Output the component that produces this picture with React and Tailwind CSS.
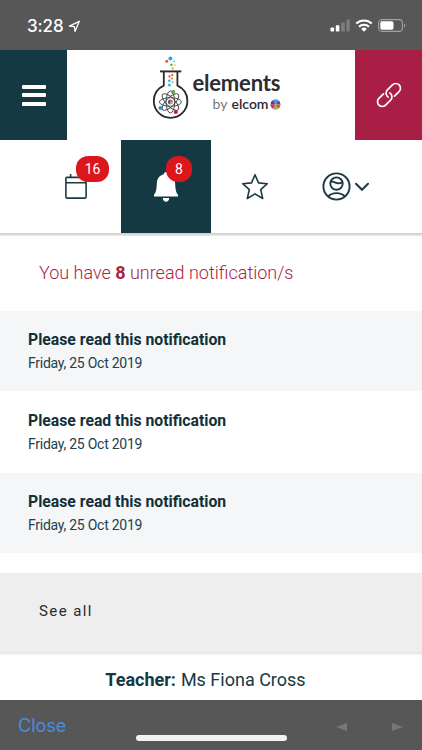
const notifications = [
  { id: 1, title: "Please read this notification", date: "Friday, 25 Oct 2019" },
  { id: 2, title: "Please read this notification", date: "Friday, 25 Oct 2019" },
  { id: 3, title: "Please read this notification", date: "Friday, 25 Oct 2019" },
];

function StatusBar() {
  return (
    <div className="flex h-[50px] shrink-0 items-center justify-between bg-[#575757] pl-[27px] pr-[16px] text-white">
      <div className="flex items-center pt-[2px]">
        <span className="font-['Inter',sans-serif] text-[17px] font-medium leading-none tracking-[-0.1px]">
          3:28
        </span>
        <svg className="ml-[4px]" width="13" height="13" viewBox="0 0 13 13" fill="none">
          <path d="M1.3 6.1 11.3 1.3 7 11.4 6.4 6.6Z" stroke="#fff" strokeWidth="1.3" strokeLinejoin="round" />
        </svg>
      </div>
      <div className="flex items-center pt-[1px]">
        <svg width="20" height="13" viewBox="0 0 20 13">
          <rect x="0.5" y="8.4" width="3.6" height="4.1" rx="0.8" fill="#fff" />
          <rect x="5.8" y="6.2" width="3.6" height="6.3" rx="0.8" fill="#fff" />
          <rect x="11.2" y="3.4" width="3.6" height="9.1" rx="0.8" fill="#7d7d7d" />
          <rect x="16.4" y="0.5" width="3.4" height="12" rx="0.8" fill="#7d7d7d" />
        </svg>
        <svg className="ml-[5px]" width="18" height="13" viewBox="0 0 18 13" fill="none" stroke="#fff">
          <path d="M1.2 4.6a11.3 11.3 0 0 1 15.6 0" strokeWidth="2.1" />
          <path d="M4 7.7a7.2 7.2 0 0 1 10 0" strokeWidth="2.1" />
          <path d="M9 12.7 6.2 9.9a4 4 0 0 1 5.6 0Z" fill="#fff" stroke="none" />
        </svg>
        <svg className="ml-[5px]" width="28" height="13" viewBox="0 0 28 13">
          <rect x="0.6" y="0.6" width="23.8" height="11.8" rx="3.4" fill="none" stroke="#a2a2a2" strokeWidth="1.1" />
          <rect x="2.3" y="2.3" width="13.2" height="8.4" rx="1.6" fill="#fff" />
          <path d="M26 4.5c1.6.5 1.6 3.5 0 4Z" fill="#a2a2a2" />
        </svg>
      </div>
    </div>
  );
}

function Flask() {
  return (
    <svg width="38" height="66" viewBox="151 54 38 66" fill="none">
      <circle cx="169.4" cy="58.5" r="2" fill="#2ba3df" />
      <circle cx="165.8" cy="61.3" r="1.5" fill="#e8562e" />
      <circle cx="173.2" cy="61.3" r="1" fill="#5cc2ee" />
      <circle cx="170.4" cy="64.7" r="1.3" fill="#62b246" />
      <circle cx="173.9" cy="65.1" r="0.8" fill="#eaa43a" />
      <circle cx="171.6" cy="68.4" r="1.1" fill="#eba23a" />
      <g stroke="#292a2e">
        <path d="M159 71.4h21.3" strokeWidth="1.9" />
        <path
          d="M162.8 71.5v14.1c-6 2.6-10 8.4-10 15.5a16.8 16.8 0 0 0 33.6 0c0-7.1-4-12.9-10-15.5v-14.1"
          strokeWidth="1.8"
          strokeLinejoin="round"
        />
      </g>
      <circle cx="171.3" cy="75" r="1" fill="#d8452e" />
      <circle cx="168.5" cy="76.4" r="1.1" fill="#df4b3a" />
      <circle cx="171" cy="78.5" r="1.2" fill="#eda02f" />
      <circle cx="168.3" cy="80.8" r="1.3" fill="#3aabdf" />
      <circle cx="171.5" cy="82.1" r="0.9" fill="#6ab84b" />
      <circle cx="168.4" cy="85" r="1.5" fill="#3db5e6" />
      <g stroke="#3a3b40" strokeWidth="0.9">
        <ellipse cx="169.4" cy="102" rx="4.3" ry="11" />
        <ellipse cx="169.4" cy="102" rx="4.3" ry="11" transform="rotate(45 169.4 102)" />
        <ellipse cx="169.4" cy="102" rx="4.3" ry="11" transform="rotate(90 169.4 102)" />
        <ellipse cx="169.4" cy="102" rx="4.3" ry="11" transform="rotate(135 169.4 102)" />
      </g>
      <circle cx="169.4" cy="102" r="3.2" fill="#fff" />
      <path d="M169.4 99.5a2.5 2.5 0 0 1 2.5 2.5h-2.5Z" fill="#e8562e" />
      <path d="M171.9 102a2.5 2.5 0 0 1-2.5 2.5V102Z" fill="#f0a433" />
      <path d="M169.4 104.5a2.5 2.5 0 0 1-2.5-2.5h2.5Z" fill="#2c6fc0" />
      <path d="M166.9 102a2.5 2.5 0 0 1 2.5-2.5v2.5Z" fill="#7a3a94" />
      <circle cx="172.1" cy="92" r="2.1" fill="#55ab40" />
      <circle cx="159.5" cy="108" r="2.1" fill="#2997d8" />
      <circle cx="174.8" cy="112" r="2.1" fill="#c4232b" />
    </svg>
  );
}

function ElcomMark() {
  return (
    <svg className="ml-[1px] mt-[2px]" width="11" height="11" viewBox="0 0 11 11">
      <path d="M5.5 5.5 3 .9Q5.5-.6 8 .9Z" fill="#2aa6de" />
      <path d="M5.5 5.5 8 .9Q10.5 2 10.6 5.5Z" fill="#2567b5" />
      <path d="M5.5 5.5h5.1Q10.4 8.8 8 10.1Z" fill="#e6502b" />
      <path d="M5.5 5.5 8 10.1Q5.5 11.5 3 10.1Z" fill="#8fbf3c" />
      <path d="M5.5 5.5 3 10.1Q.5 9 .4 5.5Z" fill="#c8326e" />
      <path d="M5.5 5.5H.4Q.6 2.2 3 .9Z" fill="#7c2d8d" />
      <circle cx="5.5" cy="5.5" r="0.9" fill="#f5a623" />
    </svg>
  );
}

function Header() {
  return (
    <header className="flex h-[90px] shrink-0 justify-between">
      <button aria-label="Menu" className="flex w-[67px] flex-col items-center justify-center gap-[4.5px] bg-[#153943]">
        <span className="h-[4px] w-[24px] rounded-[1px] bg-white" />
        <span className="h-[4px] w-[24px] rounded-[1px] bg-white" />
        <span className="h-[4px] w-[24px] rounded-[1px] bg-white" />
      </button>
      <div className="flex pl-[10px] pt-[4px]">
        <Flask />
        <div className="ml-[3px] w-[88px] pt-[15px] font-['Lato',sans-serif] text-[#2d2d31]">
          <div className="text-[22px] font-bold leading-[27px] tracking-[-0.2px]">elements</div>
          <div className="flex items-center justify-end text-[14px] leading-[15px]">
            <span className="text-[#77787b]">by</span>
            <span className="ml-[4px] font-semibold">elcom</span>
            <ElcomMark />
          </div>
        </div>
      </div>
      <button aria-label="Links" className="flex w-[67px] items-center justify-center bg-[#a91e45]">
        <svg width="26" height="26" viewBox="0 0 26 26" fill="none" stroke="#fff" strokeWidth="1.7" strokeLinecap="round">
          <path d="M7.5 11.8 2.9 16.4a4.7 4.7 0 0 0 0 6.7 4.7 4.7 0 0 0 6.7 0l5-5a4.6 4.6 0 0 0-.8-7.2" />
          <path d="M18.5 14.2l4.6-4.6a4.7 4.7 0 0 0 0-6.7 4.7 4.7 0 0 0-6.7 0l-5 5a4.6 4.6 0 0 0 .8 7.2" />
        </svg>
      </button>
    </header>
  );
}

function Badge({ children, className }) {
  return (
    <span
      className={`absolute top-[16px] flex h-[26px] items-center justify-center rounded-[12px] bg-[#dc161b] text-[14px] text-white ${className}`}
    >
      {children}
    </span>
  );
}

function NavBar() {
  return (
    <nav className="grid h-[93px] shrink-0 grid-cols-[90px_90px_90px_90px] justify-center">
      <div className="relative flex items-center justify-center">
        <svg width="24" height="28" viewBox="0 0 24 28" fill="none" stroke="#1c3a44" strokeWidth="1.6">
          <rect x="1.9" y="4.4" width="20.2" height="20.7" rx="1" />
          <path d="M2 9.7h20M6.6 1v3.5M17.4 1v3.5" />
        </svg>
        <Badge className="left-[45px] w-[33px]">16</Badge>
      </div>
      <div className="relative flex items-center justify-center bg-[#153943]">
        <svg className="mt-px" width="24" height="30" viewBox="0 0 24 30" fill="#fff">
          <path d="M12 0c1.3 0 2 .8 2.1 2.2 4.4 1 6.7 4.2 7 8.5.4 6.3.6 9.5 2.9 12v1.8H0v-1.8c2.3-2.5 2.5-5.7 2.9-12 .3-4.3 2.6-7.5 7-8.5C10 .8 10.7 0 12 0Z" />
          <path d="M8.8 26h6.4c-.2 2.5-1.4 3.8-3.2 3.8S9 28.5 8.8 26Z" />
        </svg>
        <Badge className="left-[45px] w-[26px]">8</Badge>
      </div>
      <div className="flex items-center justify-center pr-[2px]">
        <svg width="28" height="28" viewBox="0 0 28 28" fill="none" stroke="#1c3a44" strokeWidth="1.6" strokeLinejoin="round">
          <path d="m14 1.8 3.5 8.1 8.8.8-6.6 5.9 2 8.9L14 20.9l-7.7 4.6 2-8.9-6.6-5.9 8.8-.8Z" />
        </svg>
      </div>
      <div className="flex items-center justify-center">
        <svg width="29" height="29" viewBox="0 0 29 29" fill="none" stroke="#1c3a44" strokeWidth="1.9">
          <circle cx="14.5" cy="14.5" r="13.1" />
          <circle cx="14.5" cy="11.6" r="6.2" />
          <path d="M8.6 9.7c2.1-.4 3.4.2 4.9.9 2.2 1 4.6 1 6.9-.4" />
          <path d="M6.1 24.6c4-4.6 12.8-4.6 16.8 0" />
        </svg>
        <svg className="ml-[3px]" width="16" height="10" viewBox="0 0 16 10" fill="none" stroke="#1c3a44" strokeWidth="2" strokeLinecap="round">
          <path d="m2 1.8 6 6 6-6" />
        </svg>
      </div>
    </nav>
  );
}

function Notification({ title, date }) {
  return (
    <li className="mb-px h-[80px] pl-[28px] pt-[18px] odd:bg-[#f4f6f8]">
      <h3 className="text-[15.75px] font-bold leading-[22px] text-[#123039]">{title}</h3>
      <p className="mt-[3px] text-[14px] leading-[19px] tracking-[-0.25px] text-[#24404a]">{date}</p>
    </li>
  );
}

export default function App() {
  return (
    <div className="flex h-[750px] w-[422px] flex-col overflow-hidden bg-white font-['Roboto',sans-serif]">
      <StatusBar />
      <Header />
      <NavBar />
      <div className="h-[3px] shrink-0 bg-linear-to-b from-[#c9c7c9] to-[#ececec]" />

      <h2 className="h-[75px] shrink-0 pl-[39px] pt-[24px] text-[18px] font-light leading-[26px] text-[#a91e45]">
        You have <b className="font-bold">8</b> unread notification/s
      </h2>
      <ul className="shrink-0">
        {notifications.map((item) => (
          <Notification key={item.id} title={item.title} date={item.date} />
        ))}
      </ul>

      <div className="mt-[19px] flex h-[79px] shrink-0 items-center bg-[#eeeeee] pb-[2px] pl-[39px] text-[15px] tracking-[1.4px] text-[#2b2b2b]">
        See all
      </div>
      <div className="h-[3px] shrink-0 bg-linear-to-b from-[#e6e2e3] to-[#f6f4f5]" />
      <p className="flex flex-1 items-center justify-center pr-[11px] pt-[3px] text-[18px] text-[#153943]">
        <b className="mr-[5px] font-bold">Teacher:</b> Ms Fiona Cross
      </p>

      <footer className="relative flex h-[50px] shrink-0 items-center justify-between bg-[#575757] pl-[18px] pr-[19px]">
        <span className="font-['Inter',sans-serif] text-[18px] text-[#4a8be0]">Close</span>
        <div className="flex gap-[43px] pt-[3px]">
          <svg width="12" height="8" viewBox="0 0 12 8" fill="#777">
            <path d="M0 4 11 0v8Z" />
          </svg>
          <svg width="12" height="8" viewBox="0 0 12 8" fill="#777">
            <path d="M12 4 1 0v8Z" />
          </svg>
        </div>
        <div className="absolute bottom-[9px] left-[136px] h-[6px] w-[151px] rounded-full bg-[#f2f2f2]" />
      </footer>
    </div>
  );
}
